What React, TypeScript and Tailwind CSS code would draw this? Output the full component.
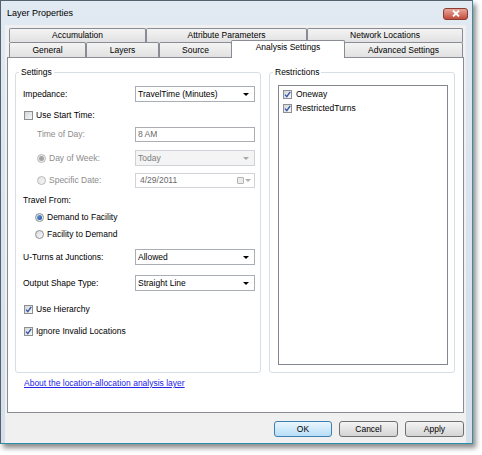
import type { ReactNode } from "react";
import clsx from "clsx";

function DropArrow({ color = "#000000" }: { color?: string }) {
  return (
    <svg width="6" height="3" viewBox="0 0 6 3" className="shrink-0">
      <path d="M0 0h6L3 3z" fill={color} />
    </svg>
  );
}

function CheckBox({ checked }: { checked?: boolean }) {
  return (
    <span className="flex h-[9px] w-[9px] shrink-0 items-center justify-center border border-[#8e8f8f] bg-gradient-to-br from-[#d3d6da] to-[#f7f7f7]">
      {checked ? (
        <svg width="7" height="7" viewBox="0 0 7 7">
          <path d="M1 3.6 L2.8 5.6 L6.2 0.9" fill="none" stroke="#3558a8" strokeWidth="1.4" />
        </svg>
      ) : null}
    </span>
  );
}

function Radio({ checked, disabled }: { checked?: boolean; disabled?: boolean }) {
  return (
    <span
      className={clsx(
        "flex h-[9px] w-[9px] shrink-0 items-center justify-center rounded-full border bg-gradient-to-br",
        disabled ? "border-[#b8b8b8] from-[#e4e4e4] to-[#f6f6f6]" : "border-[#8e8f8f] from-[#d6d9dd] to-[#fafafa]"
      )}
    >
      {checked ? (
        <span
          className={clsx(
            "h-[5px] w-[5px] rounded-full",
            disabled ? "bg-[#a4a4a4]" : "bg-gradient-to-br from-[#6aa6e8] to-[#1d4c94]"
          )}
        />
      ) : null}
    </span>
  );
}

function Combo({ value, disabled }: { value: string; disabled?: boolean }) {
  return (
    <div
      className={clsx(
        "flex h-[16px] w-[120px] items-center justify-between border pl-[2px] pr-[5px]",
        disabled ? "border-[#cfd2d6] bg-[#f4f4f4] text-[#7c7c7c]" : "border-[#a9aeb5] bg-white"
      )}
    >
      <span>{value}</span>
      <DropArrow color={disabled ? "#a8a8a8" : "#000000"} />
    </div>
  );
}

function GroupBox({ title, className, children }: { title: string; className: string; children: ReactNode }) {
  return (
    <div className={clsx("relative rounded-[3px] border border-[#d5dfe5]", className)}>
      <span className="absolute -top-[6px] left-[3px] bg-white px-[2px] leading-[11px]">{title}</span>
      {children}
    </div>
  );
}

function Tab({ label, w, tall }: { label: string; w: string; tall?: boolean }) {
  return (
    <div
      className={clsx(
        "flex shrink-0 items-center justify-center rounded-t-[2px] border border-b-0 border-[#898c95] bg-gradient-to-b from-[#f4f4f4] to-[#e1e1e1]",
        tall ? "h-[15px]" : "h-[14px]",
        w
      )}
    >
      {label}
    </div>
  );
}

function Button({ label, primary }: { label: string; primary?: boolean }) {
  return (
    <div
      className={clsx(
        "flex h-[16px] items-center justify-center rounded-[3px] border",
        primary
          ? "w-[58px] border-[#3c7fb1] bg-gradient-to-b from-[#eaf6fd] to-[#b6def7]"
          : "w-[59px] border-[#707070] bg-gradient-to-b from-[#f4f4f4] to-[#d4d4d4]"
      )}
    >
      {label}
    </div>
  );
}

const labelCol = "w-[112px] shrink-0";

export default function App() {
  return (
    <div className="h-[455px] w-[482px] bg-white font-['Liberation_Sans',Arial,sans-serif] text-[8.5px] leading-[11px] text-black">
      <div className="flex h-[444px] w-[473px] flex-col border border-[#54616f] border-r-[#3c8da3] border-b-[#2b8fa7] bg-gradient-to-b from-[#e1e9f2] to-[#d4dfea] shadow-[3px_4px_5px_rgba(0,0,0,0.45)]">
        <div className="flex h-[24px] shrink-0 items-center justify-between pl-[6px] pr-[4px]">
          <span className="text-[9px]">Layer Properties</span>
          <div className="mt-[1px] flex h-[12px] w-[25px] items-center justify-center rounded-[3px] border border-[#8a3b32] bg-gradient-to-b from-[#e8a79b] to-[#c14a3c]">
            <svg width="8" height="7" viewBox="0 0 8 7">
              <path d="M1 0.5 L7 6.5 M7 0.5 L1 6.5" stroke="#ffffff" strokeWidth="1.8" />
            </svg>
          </div>
        </div>

        <div className="ml-[4px] mr-[6px] flex flex-1 flex-col bg-[#f0f0f0] pl-[2px] pr-[2px] pt-[3px]">
          <div className="ml-[2px] flex">
            <Tab label="Accumulation" w="w-[137px]" />
            <Tab label="Attribute Parameters" w="w-[161px]" />
            <Tab label="Network Locations" w="w-[156px]" />
          </div>
          <div className="relative z-10 ml-[2px] flex h-[15px] items-end">
            <Tab label="General" w="w-[77px]" tall />
            <Tab label="Layers" w="w-[73px]" tall />
            <Tab label="Source" w="w-[73px]" tall />
            <div className="-mx-px -mb-px flex h-[18px] w-[114px] shrink-0 justify-center rounded-t-[2px] border border-b-0 border-[#898c95] bg-white pt-[1px]">
              Analysis Settings
            </div>
            <Tab label="Advanced Settings" w="w-[119px]" tall />
          </div>

          <div className="flex h-[356px] w-[457px] flex-col border border-[#898c95] bg-white pl-[7px] pr-[7px]">
            <div className="mt-[14px] flex gap-[8px]">
              <GroupBox title="Settings" className="h-[301px] w-[246px] pl-[7px] pr-[4px]">
                <div className="mt-[13px] flex h-[16px] items-center">
                  <span className={labelCol}>Impedance:</span>
                  <Combo value="TravelTime (Minutes)" />
                </div>
                <div className="mt-[6px] flex h-[14px] items-center gap-[3px] pl-[1px]">
                  <CheckBox />
                  <span>Use Start Time:</span>
                </div>
                <div className="mt-[5px] flex h-[15px] items-center text-[#8c8c8c]">
                  <span className={clsx(labelCol, "pl-[14px]")}>Time of Day:</span>
                  <div className="flex h-[15px] w-[120px] items-center border border-[#abadb3] bg-white pl-[2px] text-[#6a6a6a]">8 AM</div>
                </div>
                <div className="mt-[8px] flex h-[16px] items-center text-[#8c8c8c]">
                  <span className={clsx(labelCol, "flex items-center gap-[3px] pl-[14px]")}>
                    <Radio checked disabled />
                    Day of Week:
                  </span>
                  <Combo value="Today" disabled />
                </div>
                <div className="mt-[7px] flex h-[15px] items-center text-[#8c8c8c]">
                  <span className={clsx(labelCol, "flex items-center gap-[3px] pl-[14px]")}>
                    <Radio disabled />
                    Specific Date:
                  </span>
                  <div className="flex h-[15px] w-[120px] items-center justify-between border border-[#d0d3d7] bg-white pl-[4px] pr-[3px] text-[#6a6a6a]">
                    <span>4/29/2011</span>
                    <span className="flex items-center gap-[1px]">
                      <span className="h-[7px] w-[7px] rounded-[1px] border border-[#b4b4b4] bg-[#ececec]" />
                      <DropArrow color="#b0b0b0" />
                    </span>
                  </div>
                </div>
                <div className="mt-[6px] flex h-[12px] items-center">Travel From:</div>
                <div className="mt-[5px] flex h-[12px] items-center gap-[3px] pl-[12px]">
                  <Radio checked />
                  <span>Demand to Facility</span>
                </div>
                <div className="mt-[5px] flex h-[12px] items-center gap-[3px] pl-[12px]">
                  <Radio />
                  <span>Facility to Demand</span>
                </div>
                <div className="mt-[9px] flex h-[16px] items-center">
                  <span className={labelCol}>U-Turns at Junctions:</span>
                  <Combo value="Allowed" />
                </div>
                <div className="mt-[10px] flex h-[16px] items-center">
                  <span className={labelCol}>Output Shape Type:</span>
                  <Combo value="Straight Line" />
                </div>
                <div className="mt-[11px] flex h-[14px] items-center gap-[3px] pl-[1px]">
                  <CheckBox checked />
                  <span>Use Hierarchy</span>
                </div>
                <div className="mt-[8px] flex h-[14px] items-center gap-[3px] pl-[1px]">
                  <CheckBox checked />
                  <span>Ignore Invalid Locations</span>
                </div>
              </GroupBox>

              <GroupBox title="Restrictions" className="h-[301px] w-[186px] pl-[8px] pr-[6px] pt-[12px]">
                <div className="h-[280px] w-[170px] border border-[#828790] bg-white pl-[4px] pt-[1px]">
                  <div className="flex h-[14px] items-center gap-[4px]">
                    <CheckBox checked />
                    <span>Oneway</span>
                  </div>
                  <div className="flex h-[14px] items-center gap-[4px]">
                    <CheckBox checked />
                    <span>RestrictedTurns</span>
                  </div>
                </div>
              </GroupBox>
            </div>
            <div className="ml-[9px] mt-[5px]">
              <span className="text-[#2424e8] underline">About the location-allocation analysis layer</span>
            </div>
          </div>

          <div className="mt-[8px] flex justify-end gap-[7px]">
            <Button label="OK" primary />
            <Button label="Cancel" />
            <Button label="Apply" />
          </div>
        </div>
      </div>
    </div>
  );
}
